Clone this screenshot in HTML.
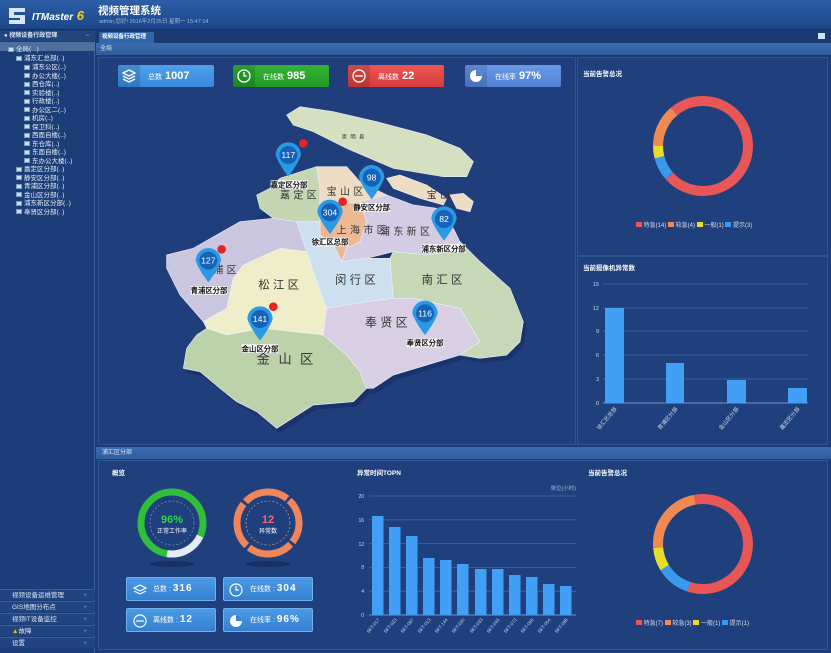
<!DOCTYPE html>
<html><head><meta charset="utf-8">
<style>
*{margin:0;padding:0;box-sizing:border-box}
body{width:831px;height:653px;overflow:hidden;background:#1e3c76;font-family:"Liberation Sans","Noto Sans CJK SC",sans-serif;color:#dfe8f5;position:relative;font-size:7px}
.abs{position:absolute}
#hdr{left:0;top:0;width:831px;height:30px;background:linear-gradient(#2d5ea6,#1c4688);border-bottom:1px solid #123064}
#side{left:0;top:31px;width:95px;height:622px;background:#1d3d78;border-right:1px solid #3a62a0}
.tr{position:absolute;white-space:nowrap;font-size:6.5px;color:#e8eef8}
.ic{display:inline-block;width:6px;height:5px;background:#cfe0f0;border:1px solid #7a9cc8;vertical-align:middle;margin-right:2px}
.acc{position:absolute;left:0;width:95px;height:11px;border-top:1px solid #3a5e98;background:#21437f;font-size:6.5px;padding-left:12px;line-height:11px}
.acc:after{content:"+";position:absolute;right:8px;color:#7fa0d0}
.stat{position:absolute;top:65px;height:22px;border-radius:2px;color:#fff;font-size:7px;line-height:22px;padding-left:30px}
.stat b{font-size:11px;font-weight:bold;margin-left:3px}
.stat i{position:absolute;left:0;top:0;width:22px;height:22px;background:rgba(0,0,0,.12)}
.btn{position:absolute;width:90px;height:24px;background:linear-gradient(#4c9ae6,#3480d0);border:1px solid #6fb0ee;border-radius:2px;color:#fff;font-size:7px;line-height:22px;padding-left:26px}
.btn b{font-size:10px;letter-spacing:1px}
.ttl{position:absolute;font-size:6.5px;font-weight:bold;color:#fff}
</style></head><body>

<div id="hdr" class="abs">
  <svg class="abs" style="left:6px;top:5px" width="22" height="22" viewBox="0 0 22 22"><path d="M3 3h16v4H8v3h11v9H3v-4h11v-2H3z" fill="#d6e6f8"/></svg>
  <div class="abs" style="left:32px;top:8px;font-size:10px;font-style:italic;font-weight:bold;color:#fff">ITMaster<span style="color:#f2d21c;font-size:13px"> 6</span></div>
  <div class="abs" style="left:98px;top:3px;font-size:10.5px;font-weight:bold;color:#fff">视频管理系统</div>
  <div class="abs" style="left:99px;top:17px;font-size:5.5px;color:#9fb8dc">admin,您好! 2016年2月25日 星期一 15:47:14</div>
</div>

<div id="side" class="abs">
  <div class="abs" style="left:0;top:0;width:95px;height:10px;background:#23457f;font-size:6px;font-weight:bold;line-height:10px;padding-left:4px">● 视频设备行政管理 <span style="position:absolute;right:6px;color:#8aa">−</span></div>
  <div class="abs" style="left:0;top:11px;width:95px;height:9px;background:#4e6e9e"></div>
  <div class="tr" style="left:8px;top:12px"><span class="ic"></span>全局(<span style="color:#6c6">...</span>)</div>
  <div class="tr" style="left:16px;top:21px"><span class="ic"></span>浦东汇总部(<span style="color:#6c6">..</span>)</div>
  <div class="tr" style="left:24px;top:30px"><span class="ic"></span>浦东公区(..)</div>
  <div class="tr" style="left:24px;top:38.5px"><span class="ic"></span>办公大楼(..)</div>
  <div class="tr" style="left:24px;top:47px"><span class="ic"></span>西仓库(..)</div>
  <div class="tr" style="left:24px;top:55.5px"><span class="ic"></span>实验楼(..)</div>
  <div class="tr" style="left:24px;top:64px"><span class="ic"></span>行政楼(..)</div>
  <div class="tr" style="left:24px;top:72.5px"><span class="ic"></span>办公区二(..)</div>
  <div class="tr" style="left:24px;top:81px"><span class="ic"></span>机房(..)</div>
  <div class="tr" style="left:24px;top:89.5px"><span class="ic"></span>保卫科(..)</div>
  <div class="tr" style="left:24px;top:98px"><span class="ic"></span>西面自楼(..)</div>
  <div class="tr" style="left:24px;top:106.5px"><span class="ic"></span>东仓库(..)</div>
  <div class="tr" style="left:24px;top:115px"><span class="ic"></span>东面自楼(..)</div>
  <div class="tr" style="left:24px;top:123.5px"><span class="ic"></span>东办公大楼(..)</div>
  <div class="tr" style="left:16px;top:132px"><span class="ic"></span>嘉定区分部(<span style="color:#6c6">..</span>)</div>
  <div class="tr" style="left:16px;top:140.5px"><span class="ic"></span>静安区分部(<span style="color:#6c6">..</span>)</div>
  <div class="tr" style="left:16px;top:149px"><span class="ic"></span>青浦区分部(<span style="color:#6c6">..</span>)</div>
  <div class="tr" style="left:16px;top:157.5px"><span class="ic"></span>金山区分部(<span style="color:#6c6">..</span>)</div>
  <div class="tr" style="left:16px;top:166px"><span class="ic"></span>浦东新区分部(<span style="color:#6c6">..</span>)</div>
  <div class="tr" style="left:16px;top:174.5px"><span class="ic"></span>奉贤区分部(<span style="color:#6c6">..</span>)</div>
  <div class="acc" style="top:558px">视频设备运维管理</div>
  <div class="acc" style="top:570px">GIS地图分布点</div>
  <div class="acc" style="top:582px">视频IT设备监控</div>
  <div class="acc" style="top:594px"><span style="color:#f2c400">▲</span>故障</div>
  <div class="acc" style="top:606px">设置</div>
</div>

<div class="abs" style="left:96px;top:30px;width:735px;height:13px;background:#1b3a72"></div>
<div class="abs" style="left:99px;top:32px;width:55px;height:11px;background:#3566aa;font-size:5.5px;line-height:11px;padding-left:3px;color:#fff;font-weight:bold">视频设备行政管理</div>
<div class="abs" style="left:818px;top:33px;width:7px;height:6px;background:#cfe0f0"></div>
<div class="abs" style="left:96px;top:43px;width:735px;height:12px;background:linear-gradient(#3c6cb0,#2f5c9e);font-size:6px;line-height:12px;padding-left:4px">全局</div>

<div class="abs" style="left:98px;top:57px;width:478px;height:388px;border:1px solid #2f5591;background:#1f3e7b"></div>
<div class="abs" style="left:577px;top:57px;width:251px;height:199px;border:1px solid #2f5591;background:#20407d"></div>
<div class="abs" style="left:577px;top:256px;width:251px;height:189px;border:1px solid #2f5591;background:#20407d"></div>
<div class="ttl" style="left:583px;top:68px">当前告警总况</div>
<div class="ttl" style="left:583px;top:262px">当前摄像机异常数</div>

<div class="stat" style="left:118px;width:96px;background:linear-gradient(#4fa0ec,#3788dc)"><i></i>总数<b>1007</b></div>
<div class="stat" style="left:233px;width:96px;background:linear-gradient(#33b335,#229a24)"><i></i>在线数<b>985</b></div>
<div class="stat" style="left:348px;width:96px;background:linear-gradient(#ee5555,#d63c3c)"><i></i>离线数<b>22</b></div>
<div class="stat" style="left:465px;width:96px;background:linear-gradient(#6b9be6,#4f80d4)"><i></i>在线率<b>97%</b></div>
<svg class="abs" style="left:120px;top:67px" width="250" height="18">
 <g fill="none" stroke="#fff" stroke-width="1.3"><path d="M3 6l6-3 6 3-6 3zM3 9l6 3 6-3M3 12l6 3 6-3"/>
 <circle cx="124" cy="9" r="6"/><path d="M124 5v4h3"/>
 <circle cx="239" cy="9" r="6"/><path d="M235 9h8"/></g>
</svg>
<svg class="abs" style="left:468px;top:68px" width="16" height="16"><circle cx="8" cy="8" r="6" fill="#fff"/><path d="M8 8V2A6 6 0 0 1 14 8z" fill="#4f80d4"/></svg>

<svg class="abs" style="left:160px;top:95px" width="370" height="340" viewBox="0 0 1110 1020">
<g transform="translate(10,14)" opacity=".35" fill="#0d2250">
<path d="M290 300L330 280 360 250 470 215 560 215 600 260 680 300 760 330 830 340 880 400 900 440 960 500 1050 580 1090 680 1080 740 1040 780 960 790 900 780 800 810 700 840 640 880 620 880 580 920 460 930 350 1000 290 950 230 920 180 880 120 830 70 820 80 760 110 720 140 700 130 680 60 600 20 520 20 480 100 460 240 380 300 340z"/>
</g>
<g stroke="#e8eef4" stroke-width="2">
<path fill="#d4e0c0" d="M380 60L420 35 520 50 650 80 800 120 900 160 940 200 920 245 850 245 700 220 560 160 460 110 400 90z"/>
<path fill="#eedcc4" d="M680 250L720 240 800 270 860 310 850 330 780 310 700 280z"/>
<path fill="#eedcc4" d="M870 300L910 295 940 320 930 350 890 340z"/>
<path fill="#c4d6b2" d="M290 300L330 280 360 250 470 215 480 280 480 380 410 380 340 370 300 340z"/>
<path fill="#eedcc4" d="M470 215L560 215 600 260 680 300 600 320 560 325 500 330 480 380 480 280z"/>
<path fill="#efb894" d="M500 330L560 325 600 320 620 380 600 440 560 460 545 500 520 450 480 420 480 380z"/>
<path fill="#d4cce4" d="M600 320L680 300 760 330 830 340 880 400 900 440 880 470 800 480 700 470 620 490 545 500 560 460 600 440 620 380z"/>
<path fill="#cde0f0" d="M410 380L480 380 480 420 520 450 545 500 620 490 690 490 700 610 620 620 500 640 470 560 440 470z"/>
<path fill="#cbc6e0" d="M20 480L100 460 240 380 340 370 410 380 440 470 360 460 250 510 220 550 200 640 130 680 60 600 20 520z"/>
<path fill="#efedca" d="M250 510L360 460 440 470 470 560 500 640 490 720 400 710 310 700 200 720 140 700 130 680 200 640 220 550z"/>
<path fill="#bcd2aa" d="M140 700L200 720 310 700 400 710 490 720 560 780 600 830 620 880 580 920 460 930 350 1000 290 950 230 920 180 880 120 830 70 820 80 760 110 720z"/>
<path fill="#d8cfe4" d="M500 640L620 620 700 610 760 610 900 640 960 740 900 780 800 810 700 840 640 880 620 880 600 830 560 780 490 720z"/>
<path fill="#c6d8b6" d="M690 490L700 470 800 480 880 470 900 440 960 500 1050 580 1090 680 1080 740 1040 780 960 790 900 780 960 740 900 640 760 610 700 610z"/>
</g>
<g font-family="Liberation Sans,Noto Sans CJK SC,sans-serif" fill="#333" font-size="30" letter-spacing="10">
<text x="545" y="130" font-size="16">崇明县</text>
<text x="360" y="310">嘉定区</text><text x="500" y="300">宝山区</text><text x="530" y="415">上海市区</text>
<text x="660" y="420">浦东新区</text><text x="525" y="565" font-size="34">闵行区</text><text x="785" y="565" font-size="34">南汇区</text>
<text x="295" y="580" font-size="34">松江区</text><text x="615" y="695" font-size="36">奉贤区</text><text x="290" y="805" font-size="40" letter-spacing="25">金山区</text>
<text x="120" y="535">青浦区</text><text x="800" y="310">宝山</text>
</g>
<g font-family="Liberation Sans,sans-serif" text-anchor="middle">
 <g transform="translate(385,180)"><path d="M-38 0A38 38 0 1 1 38 0Q30 25 0 65Q-30 25-38 0z" fill="#2a9ae4"/><circle r="27" fill="#1463b8"/><text y="9" fill="#fff" font-size="26">117</text></g>
 <g transform="translate(635,248)"><path d="M-38 0A38 38 0 1 1 38 0Q30 25 0 65Q-30 25-38 0z" fill="#2a9ae4"/><circle r="27" fill="#1463b8"/><text y="9" fill="#fff" font-size="26">98</text></g>
 <g transform="translate(510,352)"><path d="M-38 0A38 38 0 1 1 38 0Q30 25 0 65Q-30 25-38 0z" fill="#2a9ae4"/><circle r="27" fill="#1463b8"/><text y="9" fill="#fff" font-size="26">304</text></g>
 <g transform="translate(852,372)"><path d="M-38 0A38 38 0 1 1 38 0Q30 25 0 65Q-30 25-38 0z" fill="#2a9ae4"/><circle r="27" fill="#1463b8"/><text y="9" fill="#fff" font-size="26">82</text></g>
 <g transform="translate(145,497)"><path d="M-38 0A38 38 0 1 1 38 0Q30 25 0 65Q-30 25-38 0z" fill="#2a9ae4"/><circle r="27" fill="#1463b8"/><text y="9" fill="#fff" font-size="26">127</text></g>
 <g transform="translate(300,672)"><path d="M-38 0A38 38 0 1 1 38 0Q30 25 0 65Q-30 25-38 0z" fill="#2a9ae4"/><circle r="27" fill="#1463b8"/><text y="9" fill="#fff" font-size="26">141</text></g>
 <g transform="translate(795,655)"><path d="M-38 0A38 38 0 1 1 38 0Q30 25 0 65Q-30 25-38 0z" fill="#2a9ae4"/><circle r="27" fill="#1463b8"/><text y="9" fill="#fff" font-size="26">116</text></g>
 <g fill="#e52525"><circle cx="430" cy="145" r="13"/><circle cx="548" cy="320" r="13"/><circle cx="185" cy="463" r="13"/><circle cx="340" cy="635" r="13"/></g>
 <g font-size="22" fill="#111" font-weight="bold">
  <rect x="332" y="256" width="110" height="26" fill="#fff"/><text x="387" y="277">嘉定区分部</text>
  <rect x="580" y="324" width="110" height="26" fill="#fff"/><text x="635" y="345">静安区分部</text>
  <rect x="455" y="428" width="110" height="26" fill="#fff"/><text x="510" y="449">徐汇区总部</text>
  <rect x="785" y="448" width="132" height="26" fill="#fff"/><text x="851" y="469">浦东新区分部</text>
  <rect x="92" y="573" width="110" height="26" fill="#fff"/><text x="147" y="594">青浦区分部</text>
  <rect x="245" y="748" width="110" height="26" fill="#fff"/><text x="300" y="769">金山区分部</text>
  <rect x="740" y="731" width="110" height="26" fill="#fff"/><text x="795" y="752">奉贤区分部</text>
 </g>
</g>
</svg>

<svg class="abs" style="left:653px;top:96px" width="100" height="100" viewBox="0 0 100 100">
<g fill="none" stroke-width="10" transform="rotate(-90 50 50)">
<circle cx="50" cy="50" r="45" stroke="#e85656" stroke-dasharray="211.3 71.44" stroke-dashoffset="-250.5"/>
<circle cx="50" cy="50" r="45" stroke="#3a98ee" stroke-dasharray="21.2 261.54" stroke-dashoffset="-179.1"/>
<circle cx="50" cy="50" r="45" stroke="#eadc2c" stroke-dasharray="11.8 270.94" stroke-dashoffset="-200.3"/>
<circle cx="50" cy="50" r="45" stroke="#f08a52" stroke-dasharray="38.5 244.24" stroke-dashoffset="-212.1"/>
</g></svg>
<div class="abs" style="left:636px;top:220px;font-size:6px;white-space:nowrap;color:#dde">
<span style="display:inline-block;width:6px;height:5px;background:#e85656"></span> 特急(14) <span style="display:inline-block;width:6px;height:5px;background:#f08a52"></span> 较急(4) <span style="display:inline-block;width:6px;height:5px;background:#eadc2c"></span> 一般(1) <span style="display:inline-block;width:6px;height:5px;background:#3a98ee"></span> 提示(3)</div>

<svg class="abs" style="left:577px;top:256px" width="251" height="189" font-family="Liberation Sans,Noto Sans CJK SC,sans-serif">
<g stroke="#3e6aa8" stroke-width="0.8"><line x1="26" y1="28" x2="231" y2="28"/><line x1="26" y1="52" x2="231" y2="52"/><line x1="26" y1="75" x2="231" y2="75"/><line x1="26" y1="99" x2="231" y2="99"/><line x1="26" y1="123" x2="231" y2="123"/><line x1="26" y1="147" x2="231" y2="147" stroke="#8fb0e0"/></g>
<g font-size="5.5" fill="#cdd8ea" text-anchor="end"><text x="22" y="30">15</text><text x="22" y="54">12</text><text x="22" y="77">9</text><text x="22" y="101">6</text><text x="22" y="125">3</text><text x="22" y="149">0</text></g>
<g fill="#41a0f5"><rect x="28" y="52" width="19" height="95"/><rect x="89" y="107" width="18" height="40"/><rect x="150" y="124" width="19" height="23"/><rect x="211" y="132" width="19" height="15"/></g>
<g font-size="5.5" fill="#cdd8ea" text-anchor="end"><text transform="translate(40,153) rotate(-50)">徐汇区总部</text><text transform="translate(101,153) rotate(-50)">青浦区分部</text><text transform="translate(162,153) rotate(-50)">金山区分部</text><text transform="translate(223,153) rotate(-50)">嘉定区分部</text></g>
</svg>

<div class="abs" style="left:96px;top:447px;width:735px;height:12px;background:linear-gradient(#3c6cb0,#2f5c9e);font-size:6px;line-height:12px;padding-left:6px">浦汇区分部</div>
<div class="abs" style="left:98px;top:460px;width:730px;height:190px;border:1px solid #2f5591;background:#20407d"></div>
<div class="ttl" style="left:112px;top:467px">概览</div>
<div class="ttl" style="left:357px;top:467px">异常时间TOPN</div>
<div class="ttl" style="left:588px;top:467px">当前告警总况</div>

<svg class="abs" style="left:130px;top:482px" width="190" height="90" font-family="Liberation Sans,Noto Sans CJK SC,sans-serif" text-anchor="middle">
<ellipse cx="42" cy="82" rx="22" ry="3" fill="#16305f"/><ellipse cx="138" cy="82" rx="22" ry="3" fill="#16305f"/>
<circle cx="42" cy="41" r="31" fill="none" stroke="#2fbf3a" stroke-width="7"/>
<circle cx="42" cy="41" r="31" fill="none" stroke="#e4ecf8" stroke-width="7" stroke-dasharray="40 155" transform="rotate(25 42 41)"/>
<circle cx="42" cy="41" r="22" fill="none" stroke="#7fa0c8" stroke-width="0.6" stroke-dasharray="2 2"/>
<text x="42" y="41" font-size="11" font-weight="bold" fill="#34d24a">96%</text><text x="42" y="51" font-size="6" fill="#fff">正常工作率</text>
<circle cx="138" cy="41" r="31" fill="none" stroke="#f0845a" stroke-width="7" stroke-dasharray="45.7 3" transform="rotate(-47 138 41)"/>
<circle cx="138" cy="41" r="22" fill="none" stroke="#e8a890" stroke-width="0.6" stroke-dasharray="2 2"/>
<text x="138" y="41" font-size="11" font-weight="bold" fill="#f06a7a">12</text><text x="138" y="51" font-size="6" fill="#fff">异常数</text>
</svg>
<div class="btn" style="left:126px;top:577px">总数 : <b>316</b></div>
<div class="btn" style="left:223px;top:577px">在线数 : <b>304</b></div>
<div class="btn" style="left:126px;top:608px">离线数 : <b>12</b></div>
<div class="btn" style="left:223px;top:608px">在线率 : <b>96%</b></div>
<svg class="abs" style="left:132px;top:582px" width="190" height="50"><g fill="none" stroke="#fff" stroke-width="1.2">
<path d="M2 6l6-3 6 3-6 3zM2 9l6 3 6-3"/><circle cx="104" cy="8" r="6"/><path d="M104 4v4h3"/><circle cx="8" cy="39" r="6"/><path d="M4 39h8"/></g>
<circle cx="104" cy="39" r="6" fill="#fff"/><path d="M104 39V33A6 6 0 0 1 110 39z" fill="#3a86d4"/></svg>

<svg class="abs" style="left:340px;top:455px" width="250" height="198" font-family="Liberation Sans,Noto Sans CJK SC,sans-serif">
<text x="236" y="35" font-size="5.5" fill="#9fb4d4" text-anchor="end">单位(小时)</text>
<g stroke="#3e6aa8" stroke-width="0.8"><line x1="29" y1="41" x2="236" y2="41"/><line x1="29" y1="64.8" x2="236" y2="64.8"/><line x1="29" y1="88.6" x2="236" y2="88.6"/><line x1="29" y1="112.4" x2="236" y2="112.4"/><line x1="29" y1="136.2" x2="236" y2="136.2"/><line x1="29" y1="160" x2="236" y2="160" stroke="#8fb0e0"/></g>
<g font-size="5" fill="#cdd8ea" text-anchor="end"><text x="24" y="43">20</text><text x="24" y="67">16</text><text x="24" y="91">12</text><text x="24" y="114">8</text><text x="24" y="138">4</text><text x="24" y="162">0</text></g>
<g fill="#41a0f5">
<rect x="32" y="61" width="11.5" height="99"/><rect x="49" y="72" width="11.5" height="88"/><rect x="66" y="81" width="11.5" height="79"/><rect x="83" y="103" width="11.5" height="57"/><rect x="100" y="105" width="11.5" height="55"/><rect x="117" y="109" width="11.5" height="51"/><rect x="135" y="114" width="11.5" height="46"/><rect x="152" y="114" width="11.5" height="46"/><rect x="169" y="120" width="11.5" height="40"/><rect x="186" y="122" width="11.5" height="38"/><rect x="203" y="129" width="11.5" height="31"/><rect x="220" y="131" width="11.5" height="29"/></g>
<g font-size="4.5" fill="#cdd8ea" text-anchor="end">
<text transform="translate(40,165) rotate(-50)">SKT-017</text><text transform="translate(57,165) rotate(-50)">SKT-023</text><text transform="translate(74,165) rotate(-50)">SKT-087</text><text transform="translate(91,165) rotate(-50)">SKT-013</text><text transform="translate(108,165) rotate(-50)">SKT-144</text><text transform="translate(125,165) rotate(-50)">SKT-035</text><text transform="translate(143,165) rotate(-50)">SKT-033</text><text transform="translate(160,165) rotate(-50)">SKT-046</text><text transform="translate(177,165) rotate(-50)">SKT-073</text><text transform="translate(194,165) rotate(-50)">SKT-096</text><text transform="translate(211,165) rotate(-50)">SKT-054</text><text transform="translate(228,165) rotate(-50)">SKT-088</text></g>
</svg>

<svg class="abs" style="left:653px;top:494px" width="100" height="100" viewBox="0 0 100 100">
<g fill="none" stroke-width="10" transform="rotate(-90 50 50)">
<circle cx="50" cy="50" r="45" stroke="#e85656" stroke-dasharray="164.2 118.54" stroke-dashoffset="-274.1"/>
<circle cx="50" cy="50" r="45" stroke="#3a98ee" stroke-dasharray="31.4 251.34" stroke-dashoffset="-155.5"/>
<circle cx="50" cy="50" r="45" stroke="#eadc2c" stroke-dasharray="21.2 261.54" stroke-dashoffset="-186.9"/>
<circle cx="50" cy="50" r="45" stroke="#f08a52" stroke-dasharray="66 216.74" stroke-dashoffset="-208.1"/>
</g></svg>
<div class="abs" style="left:636px;top:618px;font-size:6px;white-space:nowrap;color:#dde">
<span style="display:inline-block;width:6px;height:5px;background:#e85656"></span> 特急(7) <span style="display:inline-block;width:6px;height:5px;background:#f08a52"></span> 较急(3) <span style="display:inline-block;width:6px;height:5px;background:#eadc2c"></span> 一般(1) <span style="display:inline-block;width:6px;height:5px;background:#3a98ee"></span> 提示(1)</div>

</body></html>
